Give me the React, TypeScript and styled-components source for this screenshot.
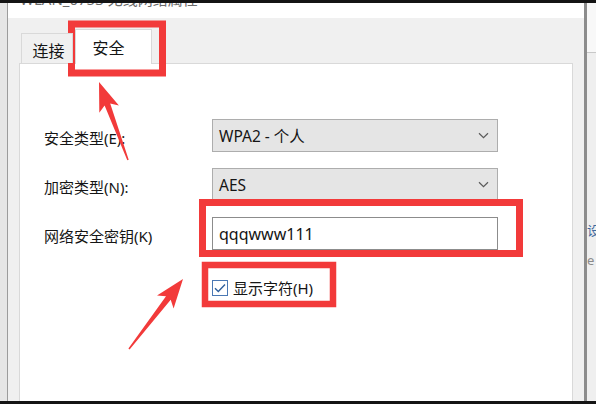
import styled, { createGlobalStyle } from "styled-components";

const GlobalStyle = createGlobalStyle`
  html, body {
    margin: 0;
    padding: 0;
    background: #000;
  }
  * {
    box-sizing: border-box;
  }
`;

const FONT = `"Segoe UI", "Noto Sans", "Noto Sans CJK SC", sans-serif`;

const Page = styled.div`
  position: relative;
  width: 596px;
  height: 404px;
  display: flex;
  flex-direction: column;
  background: #000;
  overflow: hidden;
  font-family: ${FONT};
  color: #151515;
`;

const BlackBar = styled.div`
  height: 3px;
  flex: none;
  background: #141414;
`;

const Screen = styled.div`
  flex: 1;
  display: flex;
  min-height: 0;
`;

const LeftStrip = styled.div`
  width: 8px;
  flex: none;
  background: #e6e6e6;
  border-right: 1px solid #9c9c9c;
`;

const Dialog = styled.div`
  width: 576px;
  flex: none;
  display: flex;
  flex-direction: column;
`;

const TitleBar = styled.div`
  height: 15px;
  flex: none;
  background: #fff;
  overflow: hidden;
  padding-left: 12px;
`;

const TitleText = styled.div`
  margin-top: -14px;
  font-size: 15px;
  line-height: 20px;
  color: #6a6a6a;
  white-space: nowrap;
`;

const Body = styled.div`
  flex: 1;
  display: flex;
  flex-direction: column;
  background: #f0f0f0;
  padding: 0 11px;
  min-height: 0;
`;

const TabRow = styled.div`
  height: 45px;
  flex: none;
  display: flex;
  align-items: flex-end;
  padding-left: 2px;
  gap: 2px;
`;

const Tab = styled.div<{ $active?: boolean }>`
  position: relative;
  z-index: 1;
  display: flex;
  align-items: center;
  justify-content: center;
  font-size: 16px;
  border: 1px solid #d9d9d9;
  border-bottom: none;
  background: ${(p) => (p.$active ? "#fff" : "#f0f0f0")};
  height: ${(p) => (p.$active ? "35px" : "30px")};
  width: ${(p) => (p.$active ? "77px" : "52px")};
  margin-bottom: ${(p) => (p.$active ? "-1px" : "0")};
  padding-top: ${(p) => (p.$active ? "0" : "2px")};
  padding-left: ${(p) => (p.$active ? "0" : "3px")};
  padding-right: ${(p) => (p.$active ? "10px" : "0")};
`;

const Panel = styled.div`
  flex: 1;
  background: #fff;
  border: 1px solid #d9d9d9;
  border-bottom: none;
  padding: 55px 0 0 24px;
`;

const FormGrid = styled.div`
  display: grid;
  grid-template-columns: 168px 286px;
  grid-auto-rows: 33px;
  row-gap: 16px;
  align-items: center;
`;

const Label = styled.div`
  font-size: 15px;
  white-space: nowrap;
  padding-top: 3px;
`;

const Select = styled.div`
  height: 33px;
  display: flex;
  align-items: center;
  justify-content: space-between;
  background: #e5e5e5;
  border: 1px solid #adadad;
  padding: 0 8px 0 6px;
  font-size: 15.5px;
`;

const TextBox = styled.div`
  height: 33px;
  display: flex;
  align-items: center;
  background: #fff;
  border: 1px solid #8c8c8c;
  padding-left: 6px;
  font-size: 16px;
`;

const CheckRow = styled.div`
  grid-column: 2;
  display: flex;
  align-items: center;
  gap: 5px;
  margin-top: 10px;
  height: 16px;
  font-size: 15px;
`;

const CheckBox = styled.div`
  width: 16px;
  height: 16px;
  flex: none;
  border: 1px solid #4a78b4;
  background: #fff;
  display: flex;
  align-items: center;
  justify-content: center;
`;

const RightEdge = styled.div`
  width: 3px;
  flex: none;
  background: #8c8c8c;
`;

const RightStrip = styled.div`
  width: 9px;
  flex: none;
  display: flex;
  flex-direction: column;
  background: #efefef;
  overflow: hidden;
`;

const RightTop = styled.div`
  height: 50px;
  flex: none;
  background: #f8f8f8;
  border-bottom: 1px solid #c8c8c8;
`;

const RightText = styled.div<{ $color: string; $gap: number }>`
  margin-top: ${(p) => p.$gap}px;
  font-size: 13px;
  line-height: 14px;
  white-space: nowrap;
  color: ${(p) => p.$color};
`;

const Overlay = styled.svg`
  position: absolute;
  left: 0;
  top: 0;
  pointer-events: none;
`;

const RED = "#f23a3a";

function arrowPoints(tx: number, ty: number, hx: number, hy: number) {
  const dx = hx - tx;
  const dy = hy - ty;
  const len = Math.hypot(dx, dy);
  const ux = dx / len;
  const uy = dy / len;
  const nx = -uy;
  const ny = ux;
  const pts: [number, number][] = [
    [0, -0.8],
    [len - 24, -3],
    [len - 29, -10.5],
    [len, 0],
    [len - 29, 10.5],
    [len - 24, 3],
    [0, 0.8],
  ];
  return pts
    .map(([u, v]) => `${(tx + ux * u + nx * v).toFixed(1)},${(ty + uy * u + ny * v).toFixed(1)}`)
    .join(" ");
}

function Chevron() {
  return (
    <svg width="11" height="7" viewBox="0 0 11 7">
      <path d="M1 1.2 L5.5 5.6 L10 1.2" fill="none" stroke="#5a5a5a" strokeWidth="1.2" />
    </svg>
  );
}

function Annotations() {
  return (
    <Overlay width="596" height="404" viewBox="0 0 596 404">
      <rect x="71.5" y="24" width="91" height="49" fill="none" stroke={RED} strokeWidth="7" />
      <rect x="202.5" y="202.5" width="317" height="51" fill="none" stroke={RED} strokeWidth="7" />
      <rect x="205" y="265" width="128" height="39" fill="none" stroke={RED} strokeWidth="6.5" />
      <polygon points={arrowPoints(128, 160, 99, 82)} fill={RED} />
      <polygon points={arrowPoints(129, 349, 183, 279)} fill={RED} />
    </Overlay>
  );
}

export default function App() {
  return (
    <>
      <GlobalStyle />
      <Page>
        <BlackBar />
        <Screen>
          <LeftStrip />
          <Dialog>
            <TitleBar>
              <TitleText>WLAN_0753 无线网络属性</TitleText>
            </TitleBar>
            <Body>
              <TabRow>
                <Tab>连接</Tab>
                <Tab $active>安全</Tab>
              </TabRow>
              <Panel>
                <FormGrid>
                  <Label>安全类型(E):</Label>
                  <Select>
                    <span>WPA2 - 个人</span>
                    <Chevron />
                  </Select>
                  <Label>加密类型(N):</Label>
                  <Select>
                    <span>AES</span>
                    <Chevron />
                  </Select>
                  <Label>网络安全密钥(K)</Label>
                  <TextBox>qqqwww111</TextBox>
                  <CheckRow>
                    <CheckBox>
                      <svg width="12" height="10" viewBox="0 0 12 10">
                        <path d="M1 5.2 L4.3 8.4 L11 1.4" fill="none" stroke="#2f5f9c" strokeWidth="1.4" />
                      </svg>
                    </CheckBox>
                    <span>显示字符(H)</span>
                  </CheckRow>
                </FormGrid>
              </Panel>
            </Body>
          </Dialog>
          <RightEdge />
          <RightStrip>
            <RightTop />
            <RightText $color="#3f6aa0" $gap={170}>设置</RightText>
            <RightText $color="#8a8a8a" $gap={16}>e</RightText>
          </RightStrip>
        </Screen>
        <BlackBar />
        <Annotations />
      </Page>
    </>
  );
}
